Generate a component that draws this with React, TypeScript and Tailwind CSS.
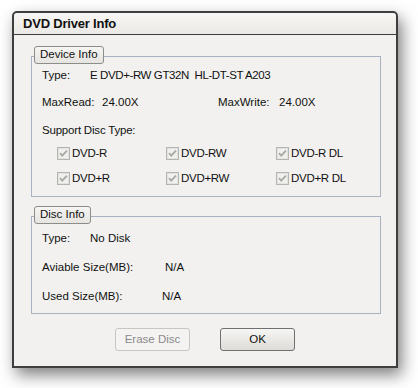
import React from 'react';

const font = { fontFamily: '"Liberation Sans", Arial, sans-serif' };

function Check({ label }: { label: string }) {
    return (
        <div className="flex items-center gap-[2px]">
            <svg width="13" height="13" viewBox="0 0 13 13" className="shrink-0">
                <rect x="0.5" y="0.5" width="12" height="12" fill="#f4f4f2" stroke="#b4b4b0" />
                <rect x="1.5" y="1.5" width="10" height="10" fill="#f0f0ee" stroke="#e2e2de" />
                <path d="M3 6.2 L5.2 8.6 L10 3.6" fill="none" stroke="#a8a8a4" strokeWidth="1.8" />
            </svg>
            <span className="text-[11.5px] text-[#111] tracking-[-0.3px]">{label}</span>
        </div>
    );
}

function Legend({ children }: { children: React.ReactNode }) {
    return (
        <div className="absolute left-[2px] top-[-11px] h-[18px] px-[5px] flex items-center rounded-[3px] border border-[#8c8c88] bg-gradient-to-b from-[#f6f5f3] to-[#e6e4e0] text-[11.5px] text-[#111] leading-none">
            {children}
        </div>
    );
}

export default function App() {
    return (
        <div className="w-[418px] h-[388px] bg-white" style={font}>
            <div className="ml-[12px] pt-[11px]">
                <div className="w-[386px] h-[357px] rounded-t-[5px] border-2 border-[#3e3e3e] bg-[#f2f1ef] shadow-[4px_7px_16px_rgba(0,0,0,0.5)] flex flex-col">
                    <div className="h-[22px] shrink-0 border-b border-[#3e3e3e] bg-gradient-to-b from-[#f7f6f4] to-[#ebe9e5] rounded-t-[4px] flex items-center pl-[9px]">
                        <span className="text-[13px] font-bold text-[#111] tracking-[-0.2px]">DVD Driver Info</span>
                    </div>

                    <div className="pl-[17px] pt-[21px]">
                        <div className="relative w-[350px] h-[141px] border border-[#a8b2c0]">
                            <Legend>Device Info</Legend>
                            <div className="pl-[10px] pt-[11px] text-[11.5px] text-[#111]">
                                <div className="flex h-[16px] items-center">
                                    <span className="w-[48px]">Type:</span>
                                    <span className="tracking-[-0.4px]">E DVD+-RW GT32N&nbsp;&nbsp;HL-DT-ST A203</span>
                                </div>
                                <div className="flex h-[16px] items-center mt-[11px]">
                                    <span className="w-[60px]">MaxRead:</span>
                                    <span className="w-[116px]">24.00X</span>
                                    <span className="w-[61px]">MaxWrite:</span>
                                    <span>24.00X</span>
                                </div>
                                <div className="flex h-[16px] items-center mt-[12px]">
                                    <span className="tracking-[-0.2px]">Support Disc Type:</span>
                                </div>
                                <div className="grid grid-cols-[109px_110px_80px] pl-[15px] mt-[6px] h-[16px] items-center">
                                    <Check label="DVD-R" />
                                    <Check label="DVD-RW" />
                                    <Check label="DVD-R DL" />
                                </div>
                                <div className="grid grid-cols-[109px_110px_80px] pl-[15px] mt-[9px] h-[16px] items-center">
                                    <Check label="DVD+R" />
                                    <Check label="DVD+RW" />
                                    <Check label="DVD+R DL" />
                                </div>
                            </div>
                        </div>

                        <div className="relative w-[350px] h-[98px] border border-[#a8b2c0] mt-[19px]">
                            <Legend>Disc Info</Legend>
                            <div className="pl-[10px] pt-[14px] text-[11.5px] text-[#111]">
                                <div className="flex h-[16px] items-center">
                                    <span className="w-[48px]">Type:</span>
                                    <span>No Disk</span>
                                </div>
                                <div className="flex h-[16px] items-center mt-[13px]">
                                    <span className="w-[123px]">Aviable Size(MB):</span>
                                    <span>N/A</span>
                                </div>
                                <div className="flex h-[16px] items-center mt-[13px]">
                                    <span className="w-[120px]">Used Size(MB):</span>
                                    <span>N/A</span>
                                </div>
                            </div>
                        </div>

                        <div className="flex mt-[14px] pl-[84px] gap-[30px]">
                            <button
                                type="button"
                                disabled
                                className="w-[75px] h-[23px] rounded-[3px] border border-[#c6c6c2] bg-[#f4f3f1] text-[11.5px] text-[#8a8a8a]"
                            >
                                Erase Disc
                            </button>
                            <button
                                type="button"
                                className="w-[75px] h-[23px] rounded-[3px] border border-[#707070] bg-gradient-to-b from-[#f6f6f4] to-[#dedcd8] text-[11.5px] text-[#111]"
                            >
                                OK
                            </button>
                        </div>
                    </div>
                </div>
            </div>
        </div>
    );
}
